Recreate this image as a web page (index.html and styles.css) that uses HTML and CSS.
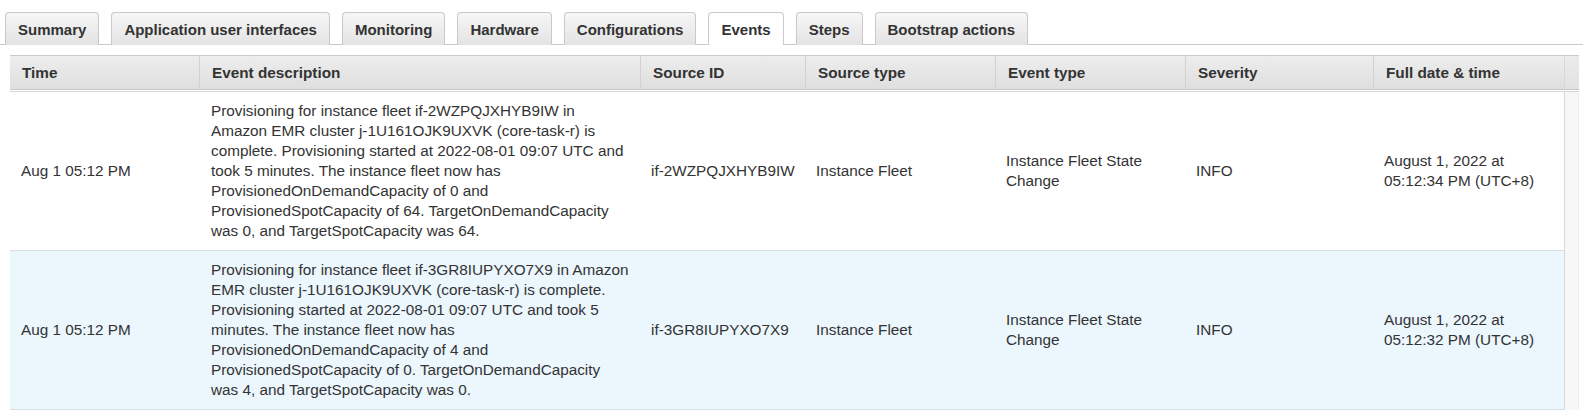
FILE: index.html
```html
<!DOCTYPE html>
<html>
<head>
<meta charset="utf-8">
<link rel="stylesheet" href="styles.css">
</head>
<body>
<div class="tabs">
  <div class="tab">Summary</div>
  <div class="tab">Application user interfaces</div>
  <div class="tab">Monitoring</div>
  <div class="tab">Hardware</div>
  <div class="tab">Configurations</div>
  <div class="tab active">Events</div>
  <div class="tab">Steps</div>
  <div class="tab">Bootstrap actions</div>
</div>
<div class="grid">
  <div class="head">
    <div class="hc">Time</div>
    <div class="hc">Event description</div>
    <div class="hc">Source ID</div>
    <div class="hc">Source type</div>
    <div class="hc">Event type</div>
    <div class="hc">Severity</div>
    <div class="hc">Full date &amp; time</div>
    <div class="hc scrollhead"></div>
  </div>
  <div class="bodywrap">
    <div class="rows">
      <div class="row">
        <div class="c">Aug 1 05:12 PM</div>
        <div class="c desc">Provisioning for instance fleet if-2WZPQJXHYB9IW in Amazon EMR cluster j-1U161OJK9UXVK (core-task-r) is complete. Provisioning started at 2022-08-01 09:07 UTC and took 5 minutes. The instance fleet now has ProvisionedOnDemandCapacity of 0 and ProvisionedSpotCapacity of 64. TargetOnDemandCapacity was 0, and TargetSpotCapacity was 64.</div>
        <div class="c nowrap">if-2WZPQJXHYB9IW</div>
        <div class="c">Instance Fleet</div>
        <div class="c">Instance Fleet State Change</div>
        <div class="c">INFO</div>
        <div class="c">August 1, 2022 at 05:12:34 PM (UTC+8)</div>
      </div>
      <div class="row hover">
        <div class="c">Aug 1 05:12 PM</div>
        <div class="c desc">Provisioning for instance fleet if-3GR8IUPYXO7X9 in Amazon EMR cluster j-1U161OJK9UXVK (core-task-r) is complete. Provisioning started at 2022-08-01 09:07 UTC and took 5 minutes. The instance fleet now has ProvisionedOnDemandCapacity of 4 and ProvisionedSpotCapacity of 0. TargetOnDemandCapacity was 4, and TargetSpotCapacity was 0.</div>
        <div class="c nowrap">if-3GR8IUPYXO7X9</div>
        <div class="c">Instance Fleet</div>
        <div class="c">Instance Fleet State Change</div>
        <div class="c">INFO</div>
        <div class="c">August 1, 2022 at 05:12:32 PM (UTC+8)</div>
      </div>
    </div>
    <div class="track"></div>
  </div>
</div>
</body>
</html>
```
FILE: styles.css
```css
html, body {
  margin: 0;
  padding: 0;
  background: #fff;
}
body {
  font-family: "Liberation Sans", Arial, Helvetica, sans-serif;
  font-size: 15.3px;
  color: #333;
  overflow: hidden;
}
.tabs {
  display: flex;
  gap: 12px;
  padding: 12px 0 0 5px;
  border-bottom: 1px solid #c9c9c9;
  height: 32px;
}
.tab {
  box-sizing: border-box;
  height: 33px;
  padding: 0 12px;
  display: flex;
  align-items: center;
  font-size: 15px;
  font-weight: bold;
  color: #333;
  border: 1px solid #c9c9c9;
  border-bottom: none;
  border-radius: 4px 4px 0 0;
  background: linear-gradient(#f6f6f6, #e3e3e3);
}
.tab.active {
  background: #fff;
}
.grid {
  margin: 10px 0 0 10px;
  width: 1569px;
}
.head {
  display: grid;
  grid-template-columns: 189px 441px 165px 190px 190px 188px 191px 15px;
  height: 33px;
  border-top: 1px solid #cbcbcb;
  border-bottom: 1px solid #c6c6c6;
  background: linear-gradient(#ededed, #dfdfdf);
}
.hc {
  display: flex;
  align-items: center;
  padding-left: 12px;
  font-weight: bold;
  color: #333;
  border-left: 1px solid #d2d2d2;
  white-space: nowrap;
}
.hc:first-child {
  border-left: none;
}
.hc.scrollhead {
  padding: 0;
  border-left: 1px solid #d8d8d8;
  background: linear-gradient(#ebebeb, #e2e2e2);
}
.bodywrap {
  display: flex;
  margin-top: 1px;
  border-top: 1px solid #d6d6d6;
}
.rows {
  width: 1554px;
  border-right: 1px solid #d9d9d9;
}
.row {
  display: grid;
  grid-template-columns: 189px 441px 165px 190px 190px 188px 191px;
  align-items: center;
  border-bottom: 1px solid #d9dde2;
  line-height: 20px;
}
.row.hover {
  background: #ebf6fd;
}
.c {
  padding: 9px 8px 9px 11px;
}
.c.desc {
  padding-left: 12px;
  padding-right: 8.5px;
}
.c.nowrap {
  white-space: nowrap;
}
.track {
  width: 13px;
  background: #f7f7f7;
  border-right: 1px solid #ececec;
}
```
